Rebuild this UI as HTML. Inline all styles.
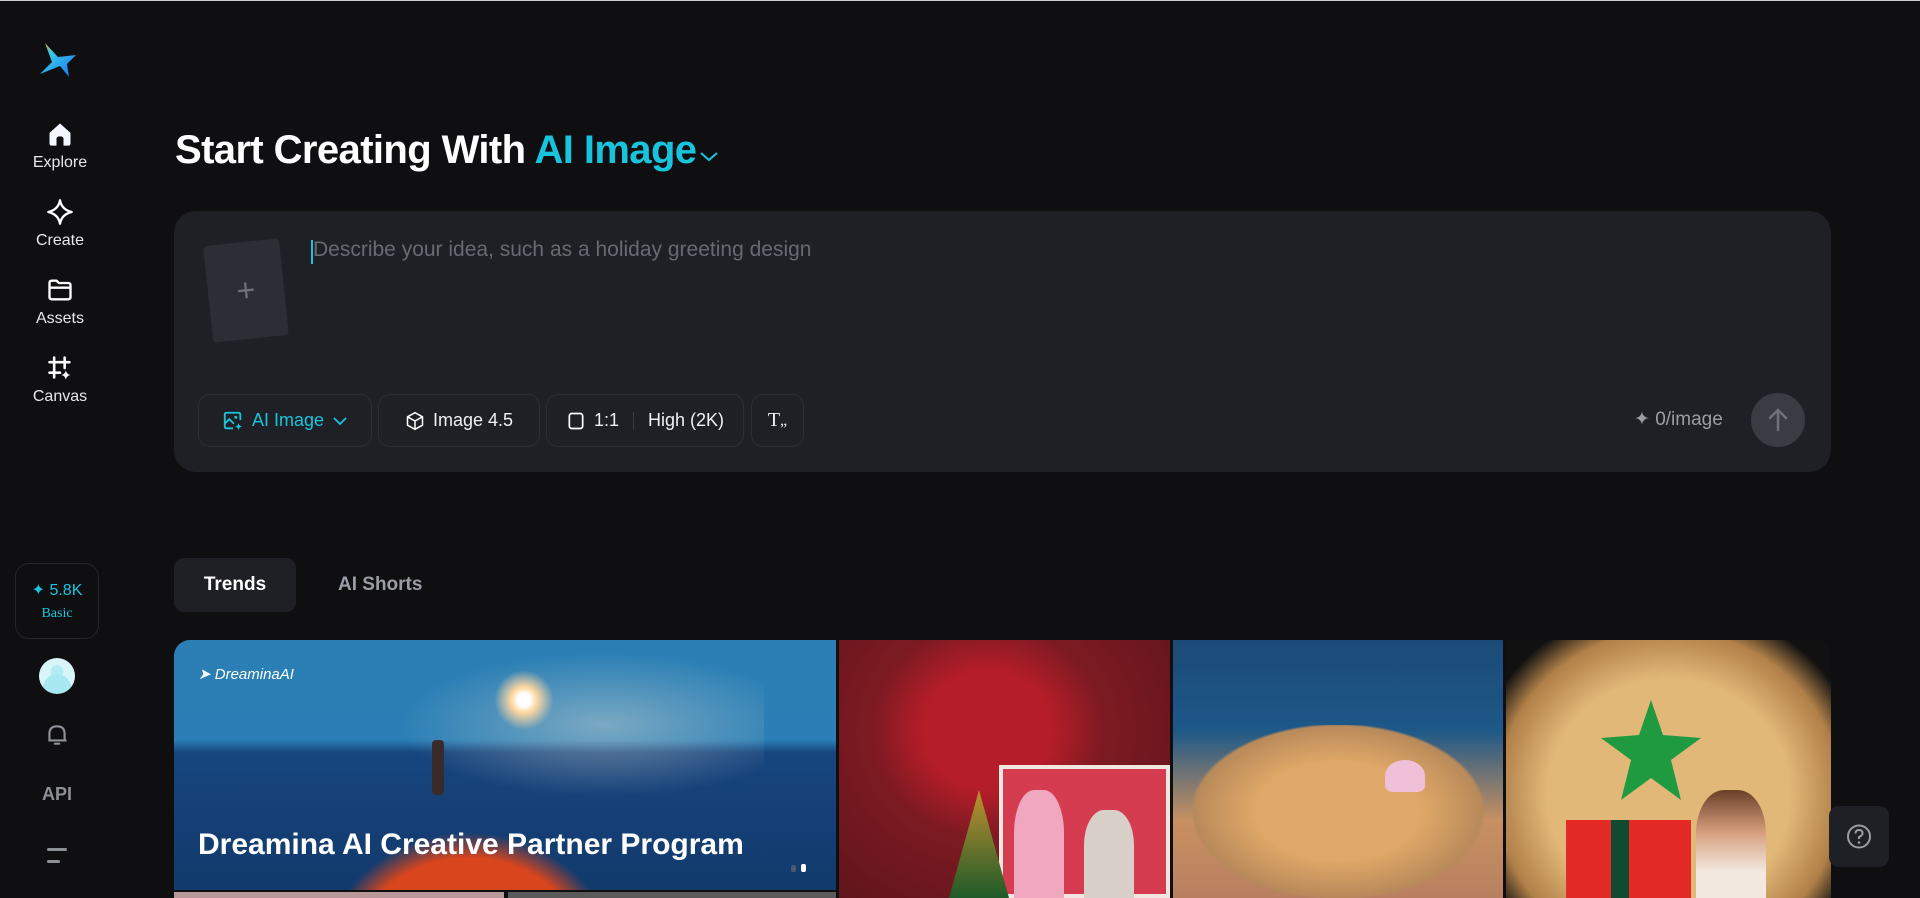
<!DOCTYPE html>
<html><head><meta charset="utf-8"><style>
*{box-sizing:border-box;margin:0;padding:0}
html,body{overflow:hidden}
body{width:1920px;height:898px;background:#0f0f12;font-family:"Liberation Sans",sans-serif;color:#fff;position:relative}
.abs{position:absolute}
.nav{position:absolute;left:0;width:120px;text-align:center;font-size:16px;color:#e8e8ea}
.nav svg{display:block;margin:0 auto 6px}
.btn{position:absolute;top:394px;height:53px;border:1px solid #2c2e34;border-radius:12px;display:flex;align-items:center;justify-content:center;font-size:18px;color:#eef0f3;gap:8px}
.card{position:absolute;top:640px;height:258px;overflow:hidden}
</style></head><body>
<div class="abs" style="left:0;top:0;width:1920px;height:1px;background:#cfcfcf"></div>
<svg class="abs" style="left:38px;top:40px" width="40" height="40" viewBox="0 0 40 40"><defs><linearGradient id="lg" x1="0" y1="0" x2="1" y2="1"><stop offset="0" stop-color="#f0a020"/><stop offset=".3" stop-color="#38c8e8"/><stop offset="1" stop-color="#1a6ef0"/></linearGradient></defs><path d="M7 3 L14 22 L2 34 L22 26 L31 37 L29 24 L38 15 L20 17 Z" fill="url(#lg)"/></svg>
<div class="nav" style="top:120px"><svg width="28" height="28" viewBox="0 0 24 24"><path d="M3 11 L12 3 L21 11 V20 Q21 22 19 22 H15 V16 Q15 14 12 14 Q9 14 9 16 V22 H5 Q3 22 3 20 Z" fill="#f4f7ff"/></svg>Explore</div>
<div class="nav" style="top:198px"><svg width="28" height="28" viewBox="0 0 24 24"><path d="M12 2 Q13.5 10 22 12 Q13.5 14 12 22 Q10.5 14 2 12 Q10.5 10 12 2Z" fill="none" stroke="#fff" stroke-width="2" stroke-linejoin="round"/></svg>Create</div>
<div class="nav" style="top:276px"><svg width="28" height="28" viewBox="0 0 24 24"><path d="M3 6 Q3 4 5 4 H9 L11 6 H19 Q21 6 21 8 V18 Q21 20 19 20 H5 Q3 20 3 18 Z M3 10 H21" fill="none" stroke="#fff" stroke-width="2"/></svg>Assets</div>
<div class="nav" style="top:354px"><svg width="28" height="28" viewBox="0 0 24 24"><path d="M7 3 V20 M16 3 V12 M3 7 H20 M3 16 H12" stroke="#fff" stroke-width="2.2" stroke-linecap="round"/><path d="M17 14 Q17.6 17.4 21 18 Q17.6 18.6 17 22 Q16.4 18.6 13 18 Q16.4 17.4 17 14Z" fill="#fff"/></svg>Canvas</div>
<div class="abs" style="left:15px;top:563px;width:84px;height:76px;border:1px solid #25262b;border-radius:14px;text-align:center;color:#18c4dc">
<div style="margin-top:16px;font-size:16px">✦ 5.8K</div>
<div style="margin-top:6px;font-size:14px;font-family:'Liberation Serif',serif">Basic</div></div>
<div class="abs" style="left:39px;top:658px;width:36px;height:36px;border-radius:50%;background:radial-gradient(circle at 50% 85%,#a8e8f0 0 40%,transparent 41%),radial-gradient(circle at 50% 38%,#b4ecf4 0 22%,transparent 23%),#d8f6fa"></div>
<svg class="abs" style="left:44px;top:722px" width="26" height="26" viewBox="0 0 24 24"><path d="M5 17 V11 Q5 4 12 4 Q19 4 19 11 V17 H4 H20 M10 20 H14" fill="none" stroke="#8d9097" stroke-width="2" stroke-linecap="round"/></svg>
<div class="abs" style="left:0;width:114px;top:784px;text-align:center;font-size:18px;font-weight:bold;color:#8d9097">API</div>
<div class="abs" style="left:47px;top:848px;width:20px;height:3px;background:#8d9097;border-radius:2px"></div>
<div class="abs" style="left:47px;top:860px;width:13px;height:3px;background:#8d9097;border-radius:2px"></div>
<div class="abs" style="left:175px;top:126px;font-size:40px;font-weight:bold;letter-spacing:-0.6px;white-space:nowrap;line-height:48px">Start Creating With <span style="color:#18c4dc">AI Image</span><svg width="22" height="14" viewBox="0 0 22 14" style="margin-left:2px"><path d="M3 4 L11 11 L19 4" fill="none" stroke="#18c4dc" stroke-width="2"/></svg></div>
<div class="abs" style="left:174px;top:211px;width:1657px;height:261px;background:#1f2025;border-radius:22px"></div>
<div class="abs" style="left:208px;top:242px;width:76px;height:97px;background:#2c2e36;border-radius:4px;transform:rotate(-6deg);color:#6e717a;font-size:32px;text-align:center;line-height:97px">+</div>
<div class="abs" style="left:311px;top:240px;width:2px;height:24px;background:#18c4dc"></div>
<div class="abs" style="left:313px;top:238px;font-size:21px;color:#676a72">Describe your idea, such as a holiday greeting design</div>
<div class="btn" style="left:198px;width:174px;color:#18c4dc"><svg width="22" height="22" viewBox="0 0 24 24"><path d="M20 11 V5 Q20 3 18 3 H5 Q3 3 3 5 V18 Q3 20 5 20 H12 M3 15 L8 10 L13 15" fill="none" stroke="#18c4dc" stroke-width="2"/><circle cx="15" cy="8" r="1.6" fill="#18c4dc"/><path d="M18 14 Q18.5 17.5 22 18 Q18.5 18.5 18 22 Q17.5 18.5 14 18 Q17.5 17.5 18 14Z" fill="#18c4dc"/></svg>AI Image<svg width="16" height="12" viewBox="0 0 16 12"><path d="M2 3 L8 9 L14 3" fill="none" stroke="#18c4dc" stroke-width="1.8"/></svg></div>
<div class="btn" style="left:378px;width:162px"><svg width="20" height="20" viewBox="0 0 24 24"><path d="M12 2 L21 7 V17 L12 22 L3 17 V7 Z M3 7 L12 12 L21 7 M12 12 V22" fill="none" stroke="#fff" stroke-width="1.8" stroke-linejoin="round"/></svg>Image 4.5</div>
<div class="btn" style="left:546px;width:198px"><svg width="20" height="20" viewBox="0 0 24 24"><rect x="4" y="3" width="16" height="18" rx="3" fill="none" stroke="#fff" stroke-width="2"/></svg>1:1<span style="width:1px;height:18px;background:#3a3c42;margin:0 6px"></span>High (2K)</div>
<div class="btn" style="left:751px;width:53px;font-family:'Liberation Serif',serif;font-size:20px">T<span style="font-size:16px;margin-left:-8px">„</span></div>
<div class="abs" style="left:1634px;top:408px;font-size:19px;color:#9a9da4">✦ 0/image</div>
<div class="abs" style="left:1751px;top:393px;width:54px;height:54px;border-radius:50%;background:#3a3c43"><svg width="54" height="54" viewBox="0 0 54 54"><path d="M27 37 V18 M19 25 L27 17 L35 25" fill="none" stroke="#6e7178" stroke-width="2.5" stroke-linecap="round"/></svg></div>
<div class="abs" style="left:174px;top:558px;width:122px;height:54px;background:#1f2025;border-radius:10px;text-align:center;line-height:54px;font-size:19px;font-weight:bold">Trends</div>
<div class="abs" style="left:338px;top:558px;line-height:54px;font-size:19px;font-weight:bold;color:#9a9da4">AI Shorts</div>
<div class="card" style="left:174px;width:662px;height:250px;border-radius:16px 0 0 0;background:linear-gradient(180deg,#2b7fb4 0%,#2a7fb6 40%,#17457e 45%,#123a6c 100%)">
<div class="abs" style="left:190px;top:0;width:400px;height:170px;background:radial-gradient(ellipse at 60% 50%,rgba(220,220,210,.45),transparent 60%)"></div>
<div class="abs" style="left:320px;top:30px;width:60px;height:60px;background:radial-gradient(circle,#fff 0 15%,#ffd7a0 30%,transparent 70%)"></div>
<div class="abs" style="left:258px;top:100px;width:12px;height:55px;background:#3a2a2a;border-radius:4px"></div>
<div class="abs" style="left:80px;top:150px;width:430px;height:170px;background:radial-gradient(ellipse 45% 100% at 50% 100%,#d9451c 0 60%,transparent 75%)"></div>
<div class="abs" style="left:24px;top:25px;font-size:15px;font-style:italic;color:#fff">➤ DreaminaAI</div>
<div class="abs" style="left:24px;top:188px;font-size:30px;font-weight:bold;white-space:nowrap">Dreamina AI Creative Partner Program</div>
<div class="abs" style="left:617px;top:225px;width:5px;height:7px;background:#4a5a70;border-radius:2px"></div>
<div class="abs" style="left:627px;top:224px;width:5px;height:8px;background:#fff;border-radius:2px"></div>
</div>
<div class="abs" style="left:174px;top:892px;width:330px;height:6px;background:#b89898"></div>
<div class="abs" style="left:508px;top:892px;width:328px;height:6px;background:#5a5a5a"></div>
<div class="card" style="left:839px;width:331px;background:radial-gradient(ellipse at 45% 35%,#b51d28 0 25%,#7d1a22 45%,#5a141a 100%)">
<div class="abs" style="left:160px;top:125px;width:171px;height:133px;background:#d63c50;border:4px solid #f2e6e0"></div>
<div class="abs" style="left:110px;top:150px;width:60px;height:108px;background:linear-gradient(#c09030,#1f5a28);clip-path:polygon(50% 0,100% 100%,0 100%)"></div>
<div class="abs" style="left:175px;top:150px;width:50px;height:108px;background:#f0a8c0;border-radius:40% 40% 0 0"></div>
<div class="abs" style="left:245px;top:170px;width:50px;height:88px;background:#d8d0c8;border-radius:40% 40% 0 0"></div>
</div>
<div class="card" style="left:1173px;width:330px;background:linear-gradient(180deg,#1c4a78 0%,#1d5888 35%,#c89060 70%,#b88060 100%)">
<div class="abs" style="left:20px;top:85px;width:290px;height:173px;background:radial-gradient(ellipse at 50% 50%,#e0a868 0 40%,#b88a5a 70%,transparent 72%)"></div>
<div class="abs" style="left:212px;top:120px;width:40px;height:32px;background:#f0c0d8;border-radius:50% 50% 20% 20%"></div>
</div>
<div class="card" style="left:1506px;width:325px;border-radius:0 16px 0 0;background:radial-gradient(ellipse 62% 75% at 50% 60%,#e2b878 0 60%,#b08048 85%,#111 100%)">
<div class="abs" style="left:95px;top:60px;width:100px;height:100px;background:#1f9a40;clip-path:polygon(50% 0,62% 35%,100% 38%,70% 60%,80% 100%,50% 78%,20% 100%,30% 60%,0 38%,38% 35%)"></div>
<div class="abs" style="left:60px;top:180px;width:125px;height:78px;background:#e42a26"></div>
<div class="abs" style="left:105px;top:180px;width:18px;height:78px;background:#114a30"></div>
<div class="abs" style="left:190px;top:150px;width:70px;height:108px;background:linear-gradient(#6a4028,#d8a080 40%,#f2e8e0 75%);border-radius:40% 40% 0 0"></div>
</div>
<div class="abs" style="left:1829px;top:806px;width:60px;height:61px;background:#1f2025;border-radius:10px"><svg width="60" height="61" viewBox="0 0 60 61"><circle cx="30" cy="30.5" r="11" fill="none" stroke="#9a9da4" stroke-width="2"/><path d="M26.5 27.5 Q26.5 24 30 24 Q33.5 24 33.5 27.3 Q33.5 29.5 30 31 V33" fill="none" stroke="#9a9da4" stroke-width="2"/><circle cx="30" cy="36.5" r="1.3" fill="#9a9da4"/></svg></div>
</body></html>
